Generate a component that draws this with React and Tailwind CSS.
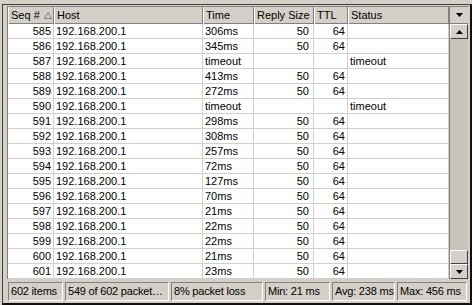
const rows = [
  [585, '306ms', 50, 64, ''],
  [586, '345ms', 50, 64, ''],
  [587, 'timeout', '', '', 'timeout'],
  [588, '413ms', 50, 64, ''],
  [589, '272ms', 50, 64, ''],
  [590, 'timeout', '', '', 'timeout'],
  [591, '298ms', 50, 64, ''],
  [592, '308ms', 50, 64, ''],
  [593, '257ms', 50, 64, ''],
  [594, '72ms', 50, 64, ''],
  [595, '127ms', 50, 64, ''],
  [596, '70ms', 50, 64, ''],
  [597, '21ms', 50, 64, ''],
  [598, '22ms', 50, 64, ''],
  [599, '22ms', 50, 64, ''],
  [600, '21ms', 50, 64, ''],
  [601, '23ms', 50, 64, ''],
];

const cols = 'grid grid-cols-[46px_149px_51px_60px_34px_101px]';

const HeadCell = ({ children }) => (
  <div className="h-full flex items-center pl-[2px] border-l border-l-white border-r border-r-[#808080]">
    {children}
  </div>
);

const Arrow = ({ up }) => (
  <svg width="7" height="4" viewBox="0 0 7 4">
    {up ? <path d="M3.5 0 L7 4 L0 4 Z" fill="#000" /> : <path d="M0 0 L7 0 L3.5 4 Z" fill="#000" />}
  </svg>
);

const Panel = ({ w, children }) => (
  <div className={`${w} h-full flex items-center pl-[2px] border-t border-l border-[#808080] border-b border-r border-b-white border-r-white whitespace-nowrap overflow-hidden tracking-[-0.2px]`}>
    {children}
  </div>
);

export default function App() {
  return (
    <div className="w-[472px] h-[305px] bg-[#d4d0c8] pt-[4px] pl-[2px] flex flex-col text-[11px] text-black" style={{ fontFamily: '"Liberation Sans", Arial, sans-serif' }}>
      <div className="flex-1 flex flex-col border-l border-t border-[#404040] border-r-2 border-b-2 border-r-[#101010] border-b-[#101010] pl-[4px] pt-[1px] pr-[1px]">
        {/* list view */}
        <div className="flex border-t border-l border-[#808080]">
          <div className="flex flex-col">
            <div className={`${cols} h-[17px] bg-[#d4d0c8] border-b border-[#808080]`}>
              <HeadCell>
                <span>Seq #</span>
                <svg className="ml-[4px]" width="8" height="7" viewBox="0 0 8 7">
                  <path d="M4 0.5 L7.5 6.5 L0.5 6.5 Z" fill="none" stroke="#808080" strokeWidth="1" />
                </svg>
              </HeadCell>
              <HeadCell>Host</HeadCell>
              <HeadCell>Time</HeadCell>
              <HeadCell>Reply Size</HeadCell>
              <HeadCell>TTL</HeadCell>
              <HeadCell>Status</HeadCell>
            </div>
            {rows.map((r) => (
              <div key={r[0]} className={`${cols} h-[15px] bg-white border-b border-[#d4d0c8]`}>
                <div className="text-right pr-[2px] border-r border-[#d4d0c8] leading-[14px]">{r[0]}</div>
                <div className="pl-[2px] border-r border-[#d4d0c8] leading-[14px]">192.168.200.1</div>
                <div className="pl-[2px] border-r border-[#d4d0c8] leading-[14px] whitespace-nowrap overflow-hidden">{r[1]}</div>
                <div className="text-right pr-[4px] border-r border-[#d4d0c8] leading-[14px]">{r[2]}</div>
                <div className="text-right pr-[2px] border-r border-[#d4d0c8] leading-[14px]">{r[3]}</div>
                <div className="pl-[2px] border-r border-[#d4d0c8] leading-[14px]">{r[4]}</div>
              </div>
            ))}
          </div>
          {/* scrollbar */}
          <div className="flex flex-col w-[19px] border-l border-[#808080]">
            <div className="h-[17px] flex items-center justify-center bg-[#d4d0c8] border-b border-[#808080]">
              <Arrow />
            </div>
            <div className="flex-1 flex flex-col bg-[#c8c4bc]">
              <div className="h-[15px] flex items-center justify-center bg-[#d4d0c8] border-t border-l border-white border-r border-b border-r-[#404040] border-b-[#404040]">
                <Arrow up />
              </div>
              <div className="flex-1" />
              <div className="h-[14px] bg-[#d4d0c8] border-t border-l border-white border-r border-b border-r-[#404040] border-b-[#404040]" />
              <div className="h-[15px] flex items-center justify-center bg-[#d4d0c8] border-t border-l border-white border-r border-b border-r-[#404040] border-b-[#404040]">
                <Arrow />
              </div>
            </div>
          </div>
        </div>
        {/* status bar */}
        <div className="mt-[3px] h-[19px] flex gap-[2px] pl-[1px]">
          <Panel w="w-[55px]">602 items</Panel>
          <Panel w="w-[104px]">549 of 602 packet…</Panel>
          <Panel w="w-[92px]">8% packet loss</Panel>
          <Panel w="w-[65px]">Min: 21 ms</Panel>
          <Panel w="w-[63px]">Avg: 238 ms</Panel>
          <Panel w="w-[70px]">Max: 456 ms</Panel>
        </div>
      </div>
    </div>
  );
}
